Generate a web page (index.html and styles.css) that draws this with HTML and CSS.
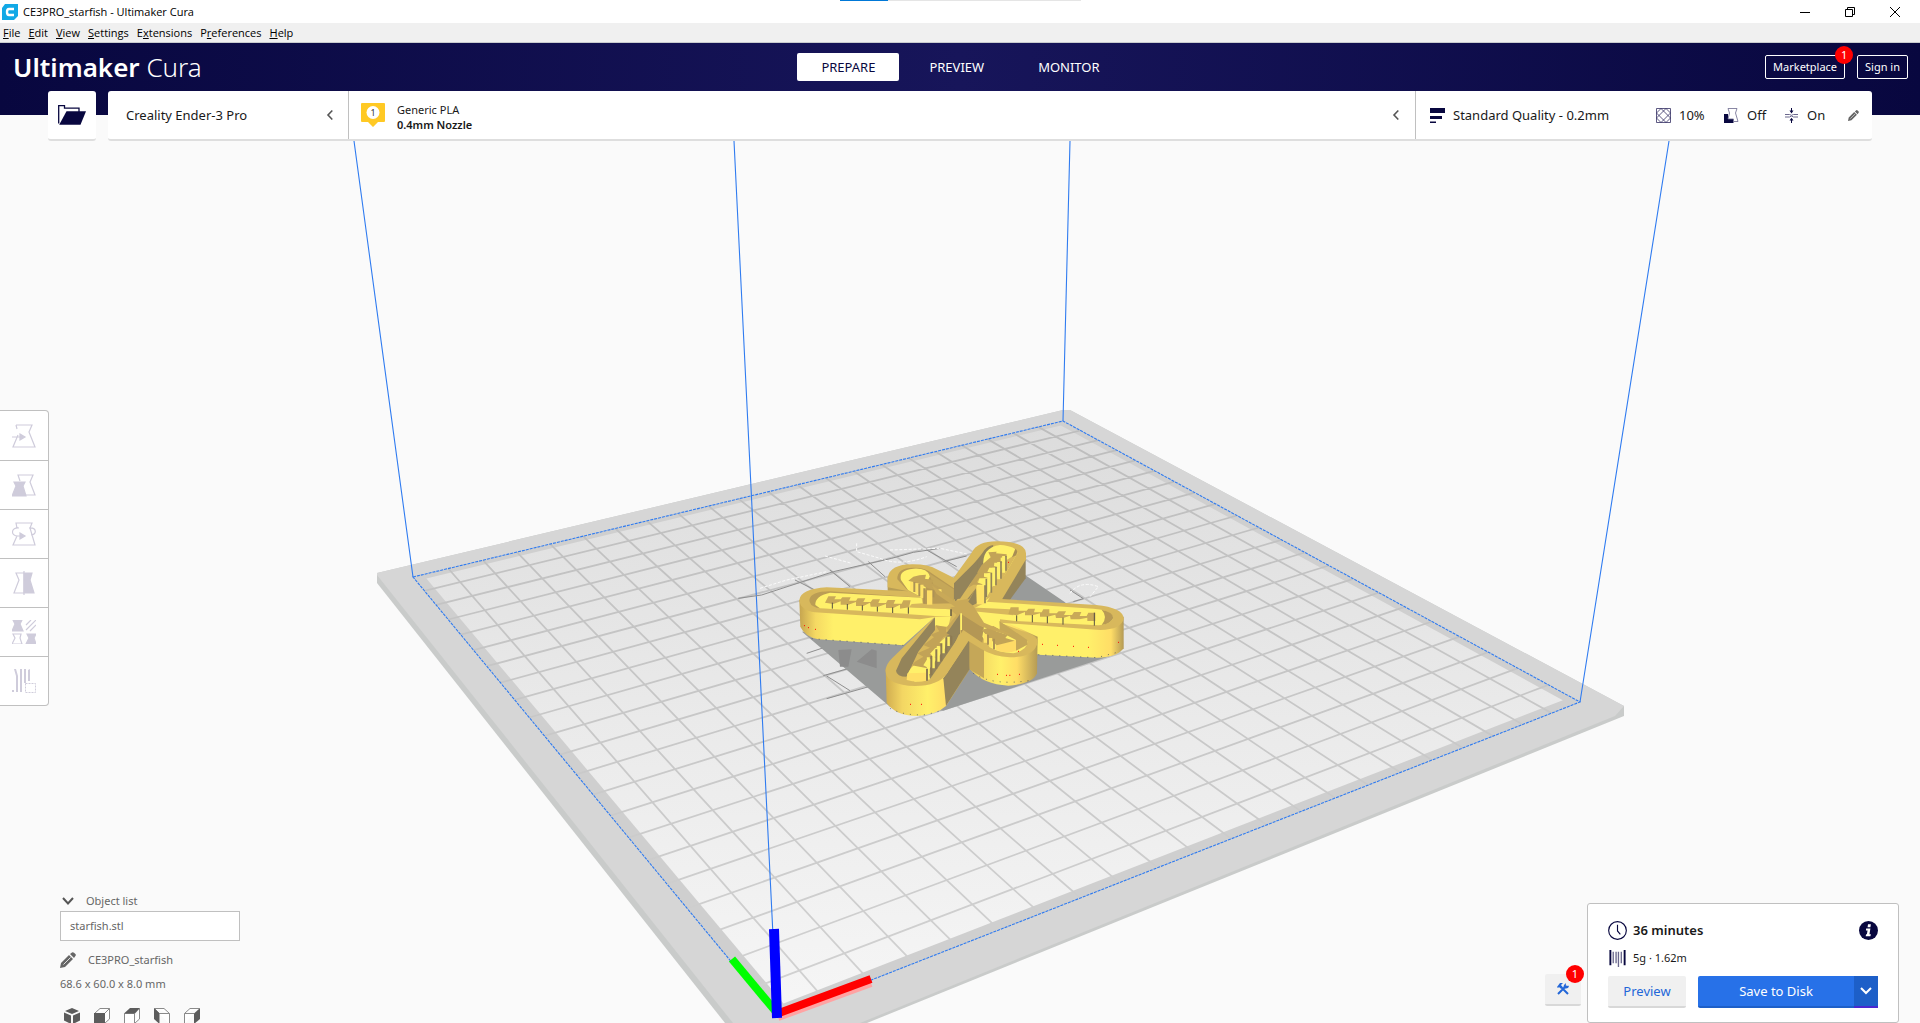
FILE: index.html
```html
<!DOCTYPE html>
<html lang="en">
<head>
<meta charset="utf-8">
<meta name="viewport" content="width=device-width, initial-scale=1">
<title>CE3PRO_starfish - Ultimaker Cura</title>
<link rel="stylesheet" href="styles.css">
</head>
<body>
<div class="titlebar">
  <svg class="app-icon" viewBox="0 0 16 16"><path d="M3 0H16V12L12 16H0V4Z" fill="#12a9e6"/><path d="M12 5H7Q5 5 5 8T7 11H12" fill="none" stroke="#fff" stroke-width="2.4"/></svg>
  <span>CE3PRO_starfish - Ultimaker Cura</span>
  <div class="load-track"><div class="load-value"></div></div>
  <div class="window-buttons">
    <button aria-label="Minimize"><svg viewBox="0 0 10 10"><path d="M0 5.5H10"/></svg></button>
    <button aria-label="Restore"><svg viewBox="0 0 10 10"><path d="M.5 2.5H7.5V9.5H.5ZM2.5 2.5V.5H9.5V7.5H7.5"/></svg></button>
    <button aria-label="Close"><svg viewBox="0 0 10 10"><path d="M0 0L10 10M10 0L0 10"/></svg></button>
  </div>
</div>
<nav class="menubar">
  <button><u>F</u>ile</button><button><u>E</u>dit</button><button><u>V</u>iew</button><button><u>S</u>ettings</button><button>E<u>x</u>tensions</button><button>P<u>r</u>eferences</button><button><u>H</u>elp</button>
</nav>

<header class="header">
  <div class="header-row">
    <div class="logo"><b>Ultimaker</b> Cura</div>
    <div class="tabs">
      <button class="tab active">PREPARE</button>
      <button class="tab">PREVIEW</button>
      <button class="tab">MONITOR</button>
    </div>
    <div class="account">
      <button class="outline">Marketplace<span class="badge">1</span></button>
      <button class="outline">Sign in</button>
    </div>
  </div>
  <div class="stage">
    <button class="open" aria-label="Open file">
      <svg viewBox="0 0 28 20"><path d="M.7 18.5V.7H6.5V3.2H21V7" fill="none" stroke="#08073f" stroke-width="1.3"/><path d="M8.5 6.3H28L22.5 19.7H1.2Z" fill="#08073f"/></svg>
    </button>
    <div class="config">
      <button class="printer"><span>Creality Ender-3 Pro</span><svg class="chev" viewBox="0 0 6 10"><path d="M5.3 .5L1 5L5.3 9.500"/></svg></button>
      <button class="material">
        <svg class="extruder" viewBox="0 0 24 24"><path d="M1 0H23Q24 0 24 1V18Q24 19 23 19H17L12 24L7 19H1Q0 19 0 18V1Q0 0 1 0Z" fill="#ffc924"/><circle cx="12" cy="9.500" r="6.500" fill="#fff"/><text x="12" y="13" text-anchor="middle" font-size="9">1</text></svg>
        <span class="material-name">Generic PLA<b>0.4mm Nozzle</b></span>
        <svg class="chev" viewBox="0 0 6 10"><path d="M5.3 .5L1 5L5.3 9.500"/></svg>
      </button>
      <button class="settings">
        <svg class="i15" viewBox="0 0 15 15" fill="#08073f"><path d="M0 0H15V5H0ZM0 8H12V11H0ZM0 13.500H6V15H0Z"/></svg>
        <span class="profile">Standard Quality - 0.2mm</span>
        <svg class="i15" viewBox="0 0 15 15" fill="none" stroke="#332f63"><path d="M.5 .5H14.500V14.500H.5ZM.5 5L5 .5M10 .5L14.500 5M.5 10L5 14.500M10 14.500L14.500 10M5 .5L14.500 10M10 .5L.5 10M.5 5L10 14.500M14.500 5L5 14.500" stroke-width=".8"/></svg>
        <span class="value infill">10%</span>
        <svg class="i15" viewBox="0 0 15 15"><path d="M0 6H4V11H9.500V15H0Z" fill="#08073f"/><path d="M4 .5H13L11.500 5L14 13.500H9.500V11H4L5.500 5Z" fill="#fff" stroke="#6b688d" stroke-width=".8"/></svg>
        <span class="value support">Off</span>
        <svg class="i15" viewBox="0 0 15 15"><path d="M1 6.500H5.500L7.500 7.300L9.500 6.500H14M1 9H5.500L7.500 8L9.500 9H14" fill="none" stroke="#6b688d"/><path d="M7 0H8V2.500H9.500L7.500 5.500L5.500 2.500H7ZM7 15H8V12.500H9.500L7.500 9.800L5.500 12.500H7Z" fill="#08073f"/></svg>
        <span class="value adhesion">On</span>
        <svg class="pencil small" viewBox="0 0 16 16"><path d="M0 16L1 11L9 3L13 7L5 15ZM10 2L12 .5Q13 -.3 14 .7L15.400 2.100Q16.300 3 15.400 4L14 6Z"/><path d="M3.500 12.500L10.500 5.500" stroke="#fff" stroke-width=".8"/></svg>
      </button>
    </div>
  </div>
</header>

<main class="viewport">
  <svg class="scene" viewBox="0 141 1920 882" preserveAspectRatio="xMidYMid slice" aria-label="Build plate with starfish model">
    <defs>
      <linearGradient id="bed" x1="0" y1="421" x2="0" y2="1017" gradientUnits="userSpaceOnUse"><stop offset="0" stop-color="#dcdcdc"/><stop offset=".5" stop-color="#eaeaea"/><stop offset="1" stop-color="#f6f6f6"/></linearGradient>
      <linearGradient id="lines" x1="0" y1="421" x2="0" y2="1017" gradientUnits="userSpaceOnUse"><stop offset="0" stop-color="#bdbdbd"/><stop offset="1" stop-color="#d2d2d2"/></linearGradient>
      <linearGradient id="wall"><stop offset="0" stop-color="#d0ac50"/><stop offset=".2" stop-color="#f3d663"/><stop offset=".5" stop-color="#fff06a"/><stop offset=".72" stop-color="#ffdd66"/><stop offset="1" stop-color="#b49a55"/></linearGradient>
      <linearGradient id="wallL"><stop offset="0" stop-color="#c5a44f"/><stop offset=".12" stop-color="#f5d963"/><stop offset=".25" stop-color="#fff06a"/><stop offset="1" stop-color="#fff06a"/></linearGradient>
      <linearGradient id="wallR"><stop offset="0" stop-color="#fff06a"/><stop offset=".72" stop-color="#fff06a"/><stop offset=".9" stop-color="#ffdd66"/><stop offset="1" stop-color="#b49a55"/></linearGradient>
    </defs>
    <path d="M377 573L1063 410H1070L1624 706V716L867 1023H725L377 583Z" fill="#c9cbca"/>
    <path d="M377 573L1063 410H1070L1624 706L1615 716L860 1023H733L377 575Z" fill="#d6d6d6"/>
    <path d="M413 577L1063 421L1580 702L777 1017Z" fill="#cfcfcf"/>
    <path id="bed-surface" fill="url(#bed)"/>
    <path id="bed-grid" fill="none" stroke="url(#lines)" stroke-width="1.800"/>
    <path d="M413 577L1063 421L1580 702L777 1017Z" fill="none" stroke="#2f7bf0" stroke-width="1.100" stroke-dasharray="3 1"/>
    <path d="M354 141L413 577M734 141L777 1017M1070 141L1063 421M1669 141L1580 702" fill="none" stroke="#2f7bf0" stroke-width="1.100"/>
    <path d="M778 1017L871 983" stroke="#ffa3a3" stroke-width="8"/>
    <path d="M777 1013L732 959" stroke="#00ff00" stroke-width="8"/>
    <path d="M779 1013L871 979" stroke="#f00" stroke-width="8"/>
    <path d="M777 1018L774 929" stroke="#00f" stroke-width="10"/>

    <g transform="translate(780 520) scale(.33333)">
      <g fill="none" stroke="#8e8e8e" stroke-width="3">
        <path d="M-125 235L-55 225L160 155L335 115L400 97L480 85M490 125L560 108M45 180L105 210M150 150L210 200M265 125L315 170M440 90L530 140M140 468L210 512M130 467L260 430M140 536L330 482M80 400L170 370M870 210L910 236L880 245"/>
        <path d="M-60 205L20 180L140 155M230 70V95L300 115Q360 140 440 110M330 90L480 85L560 102M870 220Q900 180 955 200L930 230M135 108L215 130" stroke="#fafafa" stroke-dasharray="9 5"/>
      </g>
      <path d="M66 335L330 560L490 572L1000 405L855 247L735 165L600 240L430 300Z" fill="#999b9a"/>
      <path d="M175 390L215 388L205 440H180ZM230 425L275 388L290 392V445Z" fill="#8c8c8c"/>
      <path d="M323 170V213L430 225L540 260L520 178Z" fill="#b89d54"/>
      <path d="M737 98V175L690 239L640 245Z" fill="#94845a"/>
      <path d="M58 240L61 320Q75 350 115 358L370 376L465 290V260Z" fill="url(#wallL)"/>
      <path d="M1031 290V385Q1010 413 950 413L775 404L650 330V270Z" fill="url(#wallR)"/>
      <path d="M552 250V366L570 448Q610 494 685 497Q760 491 771 460L773 350Z" fill="url(#wall)"/>
      <path d="M568 362V448L612 475V385Z" fill="#c5a758"/>
      <path d="M317 445L320 548Q345 586 410 588Q472 583 498 558L568 450V360Z" fill="url(#wall)"/>
      <path d="M490 475L568 360V448L498 558Z" fill="#94845a"/>
      <path fill="#d8b85c" d="M58 240Q62 207 140 202L385 214L323 202V173Q330 132 400 133Q445 133 470 148L521 173L575 98Q592 64 650 64Q737 65 738 100L615 234L948 255Q1030 263 1031 296Q1025 328 960 330L660 308L745 340Q773 350 773 365Q766 411 690 412Q640 410 605 388L565 363L500 462Q475 497 405 498Q320 495 317 455Q315 435 337 414L464 291L420 298L105 277Q60 270 58 240Z"/>
      <path fill="#d8b85c" d="M738 100V118L665 240H615L690 110Z"/>

      <!-- left arm cavity -->
      <path fill="#bb9d54" d="M88 240Q92 214 150 214L425 233V250L290 248L385 262V281L110 263Q88 256 88 240Z"/>
      <path fill="#fff06a" d="M106 255Q104 228 150 218L425 233L428 252L400 256L386 262V282L120 265Z"/>
      <path fill="#fff06a" d="M387 262L512 268V290L465 288L387 283Z"/>
      <path fill="#fff06a" d="M463 290H512L505 320L465 318Z"/>
      <path fill="#d8b85c" d="M395 252L450 248L525 262L512 268L387 262Z"/>

      <!-- upper left arm cavity -->
      <path fill="#b89a54" d="M352 178Q350 144 400 143Q440 143 455 160L522 205V250L430 252V235L382 210Z"/>
      <path fill="#fff06a" d="M363 180Q355 150 400 146Q440 143 450 168L440 190L430 235L384 210Z"/>
      <path fill="#c5a758" d="M445 158L521 208V248L470 215Z"/>

      <!-- upper right arm cavity -->
      <path fill="#94845a" d="M522 207L605 102Q620 76 640 75L630 115L565 190L525 248Z"/>
      <path fill="#fff06a" d="M610 140Q605 82 660 75Q710 78 712 100L680 155L618 250H590V200Z"/>
      <path fill="#d8b85c" d="M712 100L680 155L640 225L615 242L680 120Z"/>
      <path fill="#a98e54" d="M706 86Q716 92 708 106L696 112Z"/>

      <!-- right arm cavity -->
      <path fill="#fff06a" d="M568 272L620 245L940 266Q995 270 1000 294Q990 315 955 316L705 303L660 298V325Z"/>
      <path fill="#b89a54" d="M965 269Q1000 276 1000 294Q990 312 965 315Q985 290 965 269Z"/>
      <path fill="#d8b85c" d="M565 262L690 268L700 276V286L565 272Z"/>

      <!-- lower left arm cavity -->
      <path fill="#94845a" d="M465 292V330L415 395L380 470Q350 470 348 452L365 415Z"/>
      <path fill="#fff06a" d="M380 470Q390 440 410 430L510 340L515 375L450 478Q430 485 405 485Z"/>
      <path fill="#94845a" d="M500 340L540 280V345L450 478L446 450L495 385Z"/>
      <path fill="#d8b85c" d="M542 332L565 345L500 462L450 485L510 400Z"/>

      <!-- lower arm cavity -->
      <path fill="#b49755" d="M543 280L615 325L607 368L550 330L543 340Z"/>
      <path fill="#fff06a" d="M568 275L655 300L660 330L742 362Q745 390 700 400Q650 397 630 382L607 350L612 320Z"/>
      <path fill="#c5a758" d="M658 303L742 360V374L708 392V360L660 335Z"/>
      <path fill="#ffdb66" d="M648 374L708 360V392Q680 402 648 390Z"/>

      <!-- teeth -->
      <path fill="#c9a958" d="M145 229H168L163 238H182L187 232H212L207 242H228L233 235H256L250 246H272L278 238H300L295 249H318L323 240H346L341 251H365L370 241H392L387 262L360 266V254L340 264H318V252L295 260H272L270 248L250 258H228V246L205 254H182V244L160 252L135 248Z"/>
      <path d="M157 248V266M202 252V269M247 256V272M292 260V275M338 262V279M385 262V281" stroke="#554e42" stroke-width="3"/>
      <path fill="#c9a958" d="M692 262H716V272H740L745 266H765L762 277H785L790 268H808V280H830L836 274H858L852 285H876L882 276H904L899 288H920L925 278H946V303H922V293L898 298H872L870 287L850 294H828L826 284L802 290H780V280L757 286H735V276L710 286L685 282Z"/>
      <path d="M710 286V304M757 285V307M802 289V310M849 293V314M943 278V317" stroke="#554e42" stroke-width="3"/>
      <path fill="#c2a357" d="M625 97L650 95L648 100L680 103V110L662 113V124L672 128H643L642 138L655 143H628L622 155L640 160H612V170L628 175H598L590 187L612 194H580L565 203L575 185L590 160L605 135L632 112Z"/>
      <path d="M671 108V158M656 126V178M641 143V198M627 160V216M612 176V232" stroke="#fff06a" stroke-width="9"/>
      <path d="M678 108V152M663 124V176M648 140V196M634 158V218M619 176V232M615 196V250" stroke="#94845a" stroke-width="5"/>
      <path fill="#ffe268" d="M590 197H612V253H590Z"/>
      <path fill="#94845a" d="M588 205L552 250L568 262L590 250Z"/>
      <path fill="#c2a357" d="M385 182L400 170L418 166L438 164L435 176L460 180L455 190L488 206L478 214L445 205L415 192Z"/>
      <path d="M395 185V212M411 190V222M426 194V234M480 208V220" stroke="#ffe268" stroke-width="9"/>
      <path d="M403 186V216M418 192V228M433 205V250M460 211V232" stroke="#ad9156" stroke-width="6"/>
      <path fill="#ffdf66" d="M441 211H457V254H441Z"/>
      <path fill="#c2a357" d="M466 315L500 322L498 335L515 342L490 352L478 368L492 376L465 385L450 402L468 412L440 420L430 436L450 446L395 436L405 425L430 410L412 400L450 383L430 375L462 352L452 344L478 334Z"/>
      <path d="M505 350V378M490 362V400M475 378V425M460 395V445M445 412V462" stroke="#fff06a" stroke-width="9"/>
      <path d="M514 342V376M499 352V400M484 370V424M469 388V446M454 408V466M441 446V482" stroke="#8d7a53" stroke-width="6"/>
      <path fill="#ffdf66" d="M382 460L438 458V482Q410 488 380 480Z"/>
      <path fill="#c2a357" d="M605 330L640 318L655 326L648 334L683 345L676 354L704 362L650 376L625 352Z"/>
      <path d="M616 342V368M632 354V382" stroke="#ffe268" stroke-width="9"/>
      <path d="M624 344V374M642 356V388" stroke="#ad9156" stroke-width="6"/>

      <!-- centre hub -->
      <path fill="#c9a958" d="M455 196L525 243L568 236L590 200L565 245L580 258L612 308L700 345L660 338L600 318L543 282L505 338L500 322L530 285L512 270V262L525 260L470 222Z"/>
      <path fill="#94845a" d="M522 190V238L540 236L592 160V120Z"/>
      <path fill="#94845a" d="M500 340L540 282V342L520 350Z"/>
      <path fill="#554e42" d="M511 268H515V288H511Z"/>
      <path fill="#fff06a" d="M541 280H546V330H541Z"/>
      <path d="M72 317h3M84 323h3M105 328h3M390 553h3M423 553h3M651 463h3M678 466h3M688 466h3M717 463h3M714 394h3M786 373h3M831 376h3M879 379h3M924 382h3M1014 367h3M684 127h3" stroke="#f00" stroke-width="3"/>
      <path d="M95 356L370 376M330 565Q370 588 440 584L490 570M580 460Q640 500 760 480M775 404L950 413L1020 395" fill="none" stroke="#223061" stroke-width="2" stroke-dasharray="3 18"/>
    </g>
  </svg>

  <div class="overlay">
    <div class="tool-area">
      <div class="tools">
        <button aria-label="Move"><svg viewBox="0 0 24 24"><path d="M4 1H20L17 8L23 23H1L6 11M5 5L4 1M0 13H10" fill="none"/><path d="M8 10L13 13L8 16Z"/></svg></button>
        <button aria-label="Scale"><svg viewBox="0 0 24 24"><path d="M8 8L6 2H21L18 9L23 22H13" fill="none"/><path d="M2 9H13L11 13L14 23H0L4 13Z"/></svg></button>
        <button aria-label="Rotate"><svg viewBox="0 0 24 24"><path d="M5 6L4 1H20L18 6L23 23H1L5 14M7 6C-1 5 -2 14 6 14H9M17 6C25 5 25 13 19 13" fill="none"/><path d="M8 11L13 14L8 17Z"/></svg></button>
        <button aria-label="Mirror"><svg viewBox="0 0 24 24"><path d="M12 2H4L7 9L2 22H12M12 0V24" fill="none"/><path d="M12 2H20L18 9L22 22H12Z"/></svg></button>
        <button aria-label="Per model settings"><svg viewBox="0 0 24 24"><path d="M1 0H10L8 4L11 11H0L3 4ZM15 14H24L22 18L24 24H14L17 18Z"/><path d="M1 14H9L8 18L10 24H0L3 18ZM14 5L19 0M14 10L24 0M18 11L24 5" fill="none"/></svg></button>
        <button aria-label="Support blocker"><svg viewBox="0 0 24 24" class="blocker"><path d="M2 0H4L6 7V23H4V7ZM8 0H10V23H8ZM12 0H14V14H12ZM16 1L18 0V12H16ZM0 21H2V23H0Z"/><path d="M13.500 14.500H23.500V23.500H13.500Z" fill="none" stroke-width="1" stroke-dasharray="2 1"/></svg></button>
      </div>
    </div>
    <div class="bottom">
      <section class="objects">
        <button class="object-toggle"><svg viewBox="0 0 12 8"><path d="M1 1L6 6.500L11 1" fill="none" stroke="#555" stroke-width="2"/></svg>Object list</button>
        <ul class="object-items"><li>starfish.stl</li></ul>
        <button class="job"><svg class="pencil" viewBox="0 0 16 16"><path d="M0 16L1 11L9 3L13 7L5 15ZM10 2L12 .5Q13 -.3 14 .7L15.400 2.100Q16.300 3 15.400 4L14 6Z"/><path d="M3.500 12.500L10.500 5.500" stroke="#fff" stroke-width=".8"/></svg>CE3PRO_starfish</button>
        <p class="size">68.6 x 60.0 x 8.0 mm</p>
        <div class="views">
          <button aria-label="3D view"><svg viewBox="0 0 16 15"><path d="M8 0L15 3L8 6L1 3ZM0 4.500L7 7.500V16L0 12.500ZM16 4.500L9 7.500V16L16 12.500Z" fill="#5c5c5c"/></svg></button>
          <button aria-label="Front view"><svg viewBox="0 0 16 15"><path d="M.5 5.500L6 .5H15.500V11L10.500 15.500V5.500L15.500 .5"/><path class="face" d="M0 5H11V16H0Z"/></svg></button>
          <button aria-label="Top view"><svg viewBox="0 0 16 15"><path d="M.5 16V5.500H10.500V16M15.500 .5V11L10.500 15.500"/><path class="face" d="M0 5.500L6 0H16L11 5.500Z"/></svg></button>
          <button aria-label="Left view"><svg viewBox="0 0 16 15"><path d="M.5 .5H10L15.500 5.500V16M.5 .5L5.500 5.500H15.500M5.500 15.500"/><path class="face" d="M0 0L5.500 5.500V16L0 11Z"/></svg></button>
          <button aria-label="Right view"><svg viewBox="0 0 16 15"><path d="M.5 16V5.500H10M.5 5.500L6 .5H15.500"/><path class="face" d="M10 5.500L16 0V11L10 16Z"/></svg></button>
        </div>
      </section>
      <div class="actions">
        <button class="recommend" aria-label="Recommendations"><svg viewBox="0 0 12 12"><path d="M1 11L8 4M11 11L4 4" fill="none" stroke="#2367d8" stroke-width="2"/><path d="M0 4L3 0H6L4 2L5.500 4L3.500 5.500L2 4L1 5ZM7 2L9 0L8.800 2.500L11.500 3L12 2Q12 6 8 5.500L6.500 4Z" fill="#2367d8"/></svg><span class="badge">1</span></button>
        <section class="panel">
          <div class="line">
            <svg class="clock" viewBox="0 0 20 20"><circle cx="10" cy="10" r="9.300"/><path d="M10 4V10.500L13 14"/></svg>
            <strong>36 minutes</strong>
            <button class="info" aria-label="Print information"><svg viewBox="0 0 20 20"><circle cx="10" cy="10" r="10" fill="#08073f"/><path d="M9.500 3.500H12.500L12 6.500H9ZM7.500 8H12L11 14H12.500L12 16H7L7.500 14H8.300L9 10H7.300Z" fill="#fff"/></svg></button>
          </div>
          <div class="line second">
            <svg class="spool" viewBox="0 0 20 20"><path d="M2.500 1V17M17.500 1V17" stroke="#08073f" stroke-width="2"/><path d="M5.500 3V15M8.500 3V15M11 3V19M14 3V15" stroke="#6b688d" stroke-width="1.400"/></svg>
            <span>5g · 1.62m</span>
          </div>
          <div class="buttons">
            <button class="preview">Preview</button>
            <div class="split"><button class="save">Save to Disk</button><button class="more" aria-label="More outputs"><svg viewBox="0 0 12 8"><path d="M1 1L6 6L11 1" fill="none" stroke="#fff" stroke-width="2"/></svg></button></div>
          </div>
        </section>
      </div>
    </div>
  </div>
</main>
<script src="scene.js"></script>
</body>
</html>
```
FILE: styles.css
```css
* { box-sizing: border-box; }
body { margin: 0; height: 100vh; display: flex; flex-direction: column; overflow: hidden; background: #fafafa; color: #191919; font: 11px/16px "Noto Sans", sans-serif; }
button { margin: 0; padding: 0; border: 0; background: none; color: inherit; font: inherit; text-align: left; }
svg { display: block; }

.titlebar { position: relative; display: flex; align-items: center; gap: 5px; height: 23px; padding: 0 3px 0 2px; background: #fff; color: #000; font-family: "Open Sans", sans-serif; }
.app-icon { width: 16px; height: 16px; }
.load-track { position: absolute; top: 0; left: 50%; width: 241px; height: 1px; margin-left: -120px; background: #e5e5e5; }
.load-value { width: 20%; height: 1px; background: #0078d7; }
.window-buttons { display: flex; margin-left: auto; }
.window-buttons button { width: 45px; height: 23px; display: flex; align-items: center; justify-content: center; }
.window-buttons svg { width: 10px; height: 10px; fill: none; stroke: #000; }

.menubar { display: flex; gap: 8px; height: 20px; padding-left: 3px; background: #f0f0f0; border-bottom: 1px solid #c9cccf; color: #000; font-family: "Open Sans", sans-serif; }
.menubar button { height: 19px; }

.header { background: linear-gradient(90deg, #08073f, #17155a 50%, #08073f) no-repeat 0 0 / 100% 72px; }
.header-row { display: grid; grid-template-columns: 1fr auto 1fr; align-items: center; height: 48px; padding: 0 12px 0 13px; color: #fff; }
.logo { font-size: 26px; line-height: 36px; font-weight: 300; }
.logo b { font-weight: 600; }
.tabs { display: flex; gap: 6px; }
.tab { height: 28px; padding: 0 24px; border-radius: 2px; font-size: 13px; }
.tab.active { background: #fff; color: #08073f; }
.account { display: flex; justify-content: flex-end; gap: 12px; }
.outline { position: relative; height: 24px; padding: 0 7px; border: 1px solid #fff; border-radius: 2px; }
.badge { position: absolute; top: -10px; right: -9px; width: 18px; height: 18px; border-radius: 9px; background: #f00; color: #fff; line-height: 18px; text-align: center; }

.stage { display: flex; gap: 12px; height: 50px; padding: 0 48px; }
.open { display: flex; align-items: center; justify-content: center; width: 48px; background: #fff; border-bottom: 2px solid #dedede; border-radius: 3px; }
.open svg { width: 28px; height: 20px; }
.config { flex: 1; display: grid; grid-template-columns: 240px 1fr 456px; background: #fff; border-bottom: 2px solid #dedede; border-radius: 3px; }
.config button { display: flex; align-items: center; }
.config .printer { padding: 0 15px 0 18px; font-size: 13px; }
.chev { width: 6px; height: 10px; margin-left: auto; fill: none; stroke: #555; stroke-width: 1.6; overflow: visible; }
.config .material { padding: 0 16px 0 12px; border: solid #c0c0c0; border-width: 0 1px; line-height: 15px; }
.extruder { width: 24px; height: 24px; margin-right: 12px; fill: #333; }
.material-name { padding-top: 4px; }
.material-name b { display: block; font-weight: 600; }
.config .settings { padding-left: 14px; font-size: 13px; }
.i15 { width: 15px; height: 15px; margin-right: 8px; }
.profile { width: 203px; }
.value { width: 45px; }
.value.support { width: 37px; }
.value.adhesion { width: 41px; }
.pencil { width: 16px; height: 16px; fill: #666; }
.pencil.small { width: 11px; height: 11px; }

.viewport { flex: 1; position: relative; min-height: 0; }
.scene { position: absolute; inset: 0; width: 100%; height: 100%; }
.overlay { position: relative; height: 100%; display: flex; flex-direction: column; }
.tool-area { flex: 1; display: flex; align-items: center; padding-top: 84px; }
.tools { width: 49px; background: #fff; border: 1px solid #c0c0c0; border-left: 0; border-radius: 0 4px 4px 0; }
.tools button { display: flex; align-items: center; justify-content: center; width: 48px; height: 49px; }
.tools button + button { border-top: 1px solid #c0c0c0; }
.tools svg { width: 24px; height: 24px; fill: #cfccdb; stroke: #cfccdb; stroke-width: 1.2; }
.tools .blocker { stroke-width: 0; }

.bottom { display: flex; align-items: flex-end; justify-content: space-between; padding: 0 21px 0 60px; }
.objects { width: 180px; color: #666; }
.objects button { display: flex; align-items: center; }
.object-toggle svg { width: 12px; height: 8px; margin: 0 12px 0 2px; }
.object-toggle { height: 20px; }
.object-items { margin: 0 0 3px; padding: 0; list-style: none; background: #fff; border: 1px solid #c0c0c0; }
.object-items li { padding: 6px 9px; }
.job { gap: 12px; height: 32px; }
.size { margin: 0; height: 32px; line-height: 16px; }
.views { display: flex; gap: 14px; padding-left: 4px; }
.views svg { width: 16px; height: 15px; fill: #fff; stroke: #8a8a8a; stroke-width: 1; }
.views svg .face, .views button:first-child svg { fill: #5c5c5c; stroke: none; }

.actions { display: flex; align-items: flex-end; gap: 6px; }
.recommend { position: relative; display: flex; align-items: center; justify-content: center; width: 36px; height: 32px; margin-bottom: 17px; background: #f0f0f0; border-bottom: 2px solid #d8d8d8; border-radius: 2px; }
.recommend svg { width: 12px; height: 12px; }
.recommend .badge { top: -9px; right: -3px; }
.panel { width: 312px; padding: 16px 20px 14px; background: #fff; border: 1px solid #c0c0c0; border-radius: 3px; }
.line { display: flex; align-items: center; gap: 6px; height: 20px; }
.line svg { width: 19px; height: 19px; }
.line strong { font-size: 13px; font-weight: 600; }
.clock { fill: none; stroke: #08073f; stroke-width: 1.2; }
.info { margin-left: auto; }
.second { margin: 8px 0; }
.buttons { display: flex; gap: 12px; font-size: 13px; }
.buttons button { height: 32px; text-align: center; }
.preview { width: 78px; background: #f0f0f0; border-bottom: 2px solid #d8d8d8; border-radius: 2px; color: #2367d8; }
.split { flex: 1; display: flex; color: #fff; }
.save { flex: 1; background: #2771e8; border-bottom: 2px solid #1d5fc8; border-radius: 2px 0 0 2px; }
.buttons .more { display: flex; align-items: center; justify-content: center; width: 24px; background: #1d5fc8; border-bottom: 2px solid #4a28d0; }
.more svg { width: 12px; height: 8px; }
```
FILE: scene.js
```js
// Perspective projection of the square build plate: left, back, right, front corners.
const [A, B, C, D] = [[413, 577], [1063, 421], [1580, 702], [777, 1017]];
const dx1 = B[0] - C[0], dx2 = D[0] - C[0], sx = A[0] - B[0] + C[0] - D[0];
const dy1 = B[1] - C[1], dy2 = D[1] - C[1], sy = A[1] - B[1] + C[1] - D[1];
const det = dx1 * dy2 - dx2 * dy1;
const g = (sx * dy2 - dx2 * sy) / det;
const h = (dx1 * sy - sx * dy1) / det;

function project(u, v) {
  const w = g * u + h * v + 1;
  return [0, 1].map(i =>
    (((B[i] - A[i] + g * B[i]) * u + (D[i] - A[i] + h * D[i]) * v + A[i]) / w).toFixed(1)).join(' ');
}

const CELLS = 22;
let lines = '';
for (let i = 1; i < CELLS; i++) {
  const t = i / CELLS;
  lines += `M${project(t, 0)}L${project(t, 1)}M${project(0, t)}L${project(1, t)}`;
}
document.getElementById('bed-grid').setAttribute('d', lines);

const m = 0.013, n = 1 - m;
document.getElementById('bed-surface').setAttribute('d',
  `M${project(m, m)}L${project(n, m)}L${project(n, n)}L${project(m, n)}Z`);
```
